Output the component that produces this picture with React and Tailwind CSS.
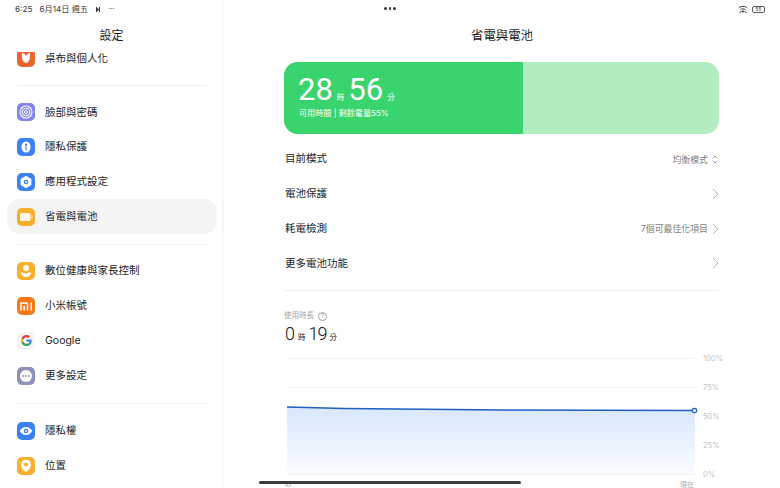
import React from "react";

const font = "font-['Inter','Noto_Sans_CJK_TC',sans-serif]";
const digits = "font-['Roboto','Noto_Sans_CJK_TC',sans-serif]";

const IconBox = ({ bg, children }) => (
  <div className={`w-[18px] h-[18px] rounded-[5px] flex items-center justify-center shrink-0 ${bg}`}>
    {children}
  </div>
);

const WallpaperIcon = () => (
  <IconBox bg="bg-[#f0622e]">
    <svg width="12" height="12" viewBox="0 0 12 12">
      <path d="M2 1c2 .3 3.300 1.500 4 3 .7-1.500 2-2.700 4-3 .4 4 0 9-4 10C2 10 1.600 5 2 1z" fill="#fff" />
    </svg>
  </IconBox>
);

const FaceIcon = () => (
  <IconBox bg="bg-[#8086ee]">
    <svg width="14" height="14" viewBox="0 0 14 14" fill="none" stroke="#fff">
      <circle cx="7" cy="7" r="6" strokeWidth="1.100" />
      <circle cx="7" cy="7" r="3.700" strokeWidth="1.100" />
      <circle cx="7" cy="7" r="1.500" strokeWidth="1" />
    </svg>
  </IconBox>
);

const PrivacyIcon = () => (
  <IconBox bg="bg-[#3b82f6]">
    <svg width="12" height="14" viewBox="0 0 12 14">
      <ellipse cx="6" cy="7" rx="4.600" ry="5.600" fill="#fff" />
      <path d="M6 4v6.500" stroke="#3b82f6" strokeWidth="1.100" />
      <circle cx="6" cy="4.500" r="1" fill="#3b82f6" />
    </svg>
  </IconBox>
);

const AppsIcon = () => (
  <IconBox bg="bg-[#3b82f6]">
    <svg width="14" height="14" viewBox="0 0 14 14">
      <path d="M7 .8l5.400 3.100v6.200L7 13.200 1.600 10.100V3.900z" fill="#fff" />
      <circle cx="7" cy="7" r="2.300" fill="#3b82f6" />
      <circle cx="7" cy="7" r="1.100" fill="#fff" />
    </svg>
  </IconBox>
);

const BatteryIcon = () => (
  <IconBox bg="bg-[#f7ae2c]">
    <svg width="14" height="10" viewBox="0 0 14 10">
      <rect x="1" y="1" width="10.500" height="8" rx="1.500" fill="#fff" fillOpacity="0.9" />
      <rect x="12.300" y="3.200" width="1.200" height="3.600" rx=".5" fill="#fff" fillOpacity="0.8" />
    </svg>
  </IconBox>
);

const WellbeingIcon = () => (
  <IconBox bg="bg-[#fbb02d]">
    <svg width="12" height="14" viewBox="0 0 12 14" fill="#fff">
      <circle cx="6" cy="4" r="2.900" />
      <path d="M.8 8.800C2.500 8.200 4.500 8.700 6 10c1.500-1.300 3.500-1.800 5.200-1.200C10.800 11.500 8.500 13 6 13S1.200 11.500.8 8.800z" />
    </svg>
  </IconBox>
);

const MiIcon = () => (
  <IconBox bg="bg-[#f57a14]">
    <svg width="13" height="9" viewBox="0 0 13 9" fill="none" stroke="#fff" strokeWidth="1.500">
      <path d="M1 8.500V1h5.200c.8 0 1.300.5 1.300 1.300v6.200M4.200 4v4.500" />
      <path d="M11.200.5v8" />
    </svg>
  </IconBox>
);

const GoogleIcon = () => (
  <IconBox bg="bg-[#f5f5f5]">
    <svg width="11" height="11" viewBox="0 0 24 24">
      <path fill="#4285F4" d="M23.500 12.300c0-.8-.1-1.600-.2-2.300H12v4.500h6.500c-.3 1.500-1.100 2.700-2.400 3.600v3h3.900c2.200-2.100 3.500-5.100 3.500-8.800z" />
      <path fill="#34A853" d="M12 24c3.200 0 6-1.100 8-2.900l-3.900-3c-1.100.7-2.500 1.200-4.100 1.200-3.100 0-5.800-2.100-6.700-5H1.300v3.100C3.300 21.300 7.300 24 12 24z" />
      <path fill="#FBBC05" d="M5.300 14.300c-.5-1.500-.5-3.100 0-4.600V6.600h-4C-.4 9.900-.4 14.100 1.300 17.400z" />
      <path fill="#EA4335" d="M12 4.800c1.800 0 3.300.6 4.600 1.800l3.400-3.400C17.900 1.200 15.200 0 12 0 7.300 0 3.300 2.700 1.300 6.600l4 3.100c.9-2.800 3.600-4.900 6.700-4.900z" />
    </svg>
  </IconBox>
);

const MoreIcon = () => (
  <IconBox bg="bg-[#8e93b5]">
    <svg width="14" height="14" viewBox="0 0 14 14">
      <circle cx="7" cy="7" r="6" fill="#fff" />
      <circle cx="4.300" cy="7" r=".9" fill="#8e93b5" />
      <circle cx="7" cy="7" r=".9" fill="#8e93b5" />
      <circle cx="9.700" cy="7" r=".9" fill="#8e93b5" />
    </svg>
  </IconBox>
);

const EyeIcon = () => (
  <IconBox bg="bg-[#3b82f6]">
    <svg width="14" height="10" viewBox="0 0 14 10">
      <path d="M.8 5C2.300 2.300 4.500 1 7 1s4.700 1.300 6.200 4C11.700 7.700 9.500 9 7 9S2.300 7.700.8 5z" fill="#fff" />
      <circle cx="7" cy="5" r="2.300" fill="#3b82f6" />
      <circle cx="7" cy="5" r="1" fill="#fff" />
    </svg>
  </IconBox>
);

const PinIcon = () => (
  <IconBox bg="bg-[#fbb02d]">
    <svg width="12" height="14" viewBox="0 0 12 14">
      <path d="M6 .8c2.800 0 5 2.100 5 4.900 0 3.100-2.800 5.800-5 7.500-2.200-1.700-5-4.400-5-7.500C1 2.900 3.200.8 6 .8z" fill="#fff" />
      <circle cx="6" cy="5.500" r="1.900" fill="#fbb02d" />
    </svg>
  </IconBox>
);

const Divider = ({ gap = "my-[9.100px]" }) => <div className={`ml-[17px] mr-[15px] h-px bg-[#efefef] ${gap}`} />;

const NavItem = ({ icon, label, active }) => (
  <div className={`h-[34.800px] ml-[7px] mr-[5px] px-[10px] flex items-center gap-[10px] rounded-[13px] text-[10.500px] text-[#1c1c1c] ${active ? "bg-[#f4f4f4]" : ""}`}>
    {icon}
    <span>{label}</span>
  </div>
);

const Chevron = () => (
  <svg width="7" height="12" viewBox="0 0 7 12" fill="none" stroke="#b4b4b4" strokeWidth="1">
    <path d="M1 1l5 5-5 5" />
  </svg>
);

const Updown = () => (
  <svg width="6" height="9" viewBox="0 0 6 9" fill="none" stroke="#8a8a8a" strokeWidth="0.9">
    <path d="M.8 3.300L3 1l2.200 2.300M.8 5.700L3 8l2.200-2.300" />
  </svg>
);

const SettingRow = ({ label, value, icon }) => (
  <div className="h-[34.700px] flex items-center justify-between pl-px">
    <span className="text-[10.500px] text-[#1c1c1c]">{label}</span>
    <div className="flex items-center gap-[4px]">
      {value && <span className="text-[8.900px] text-[#7d7d7d]">{value}</span>}
      <div className="w-[7px] flex justify-start">{icon}</div>
    </div>
  </div>
);

const Chart = () => (
  <svg width="445" height="134" viewBox="0 -4 445 134" className="block">
    <defs>
      <linearGradient id="fill" x1="0" y1="0" x2="0" y2="1">
        <stop offset="0" stopColor="#d9e7fd" />
        <stop offset="1" stopColor="#fafcff" />
      </linearGradient>
    </defs>
    {[0, 29, 58, 87, 116].map((y) => (
      <line key={y} x1="3" x2="411" y1={y + 0.5} y2={y + 0.5} stroke="#f1f1f1" />
    ))}
    <path d="M3 49 L60 50.500 L220 52 L411 52.500 V116 H3 Z" fill="url(#fill)" />
    <line x1="3" x2="411" y1="87.500" y2="87.500" stroke="#e8effb" />
    <path d="M3 49 L60 50.500 L220 52 L411 52.500" fill="none" stroke="#1f5fc0" strokeWidth="1.300" />
    <circle cx="410.500" cy="52.500" r="2.200" fill="#fff" stroke="#1f5fc0" strokeWidth="1.200" />
    {["100%", "75%", "50%", "25%", "0%"].map((t, i) => (
      <text key={t} x="419" y={i * 29 + 3} fontSize="7.500" fill="#c2c2c2">{t}</text>
    ))}
    <text x="396" y="128.500" fontSize="7" fill="#a8a8a8">現在</text>
    <text x="0" y="128.500" fontSize="7" fill="#a8a8a8">18</text>
  </svg>
);

export default function App() {
  return (
    <div className={`relative w-[780px] h-[488px] overflow-hidden bg-white flex ${font}`}>
      {/* status bar */}
      <div className="absolute z-20 top-0 left-0 right-0 h-[19px] px-[15px] flex items-center justify-between text-[#3a3a3a]">
        <div className="flex items-center gap-[7px] text-[8.200px]">
          <span>6:25</span>
          <span>6月14日 週五</span>
          <svg width="7" height="7" viewBox="0 0 7 7" fill="#3a3a3a">
            <path d="M1 .5v6l3-3zM4 1h1v5H4z" />
          </svg>
          <span className="-ml-[1px] text-[7px]">···</span>
        </div>
        <div className="flex items-center gap-[4px]">
          <svg width="10" height="9" viewBox="0 0 10 9" fill="none" stroke="#3a3a3a" strokeWidth="1">
            <path d="M.7 3C3 .8 7 .8 9.300 3M2.300 4.800C3.800 3.500 6.200 3.500 7.700 4.800M1.500 8l2-2M8.500 8l-2-2" />
            <circle cx="5" cy="6.500" r="0.700" fill="#3a3a3a" />
          </svg>
          <div className="w-[13px] h-[7px] rounded-[2px] border border-[#5a5a5a] flex items-center justify-center text-[5px] leading-none">55</div>
        </div>
      </div>
      <div className="absolute z-20 top-[7px] left-[384px] flex gap-[2px]">
        <div className="w-[2.500px] h-[2.500px] rounded-full bg-[#333]" />
        <div className="w-[2.500px] h-[2.500px] rounded-full bg-[#333]" />
        <div className="w-[2.500px] h-[2.500px] rounded-full bg-[#333]" />
      </div>

      {/* sidebar */}
      <aside className="w-[224px] h-full shrink-0 border-r-2 border-[#f7f7f7] flex flex-col">
        <div className="h-[52px] pt-[28px] pl-px shrink-0 text-center text-[12px] leading-[16px] text-[#1c1c1c]">設定</div>
        <div className="flex-1 overflow-hidden">
          <div className="-mt-[11px]">
            <NavItem icon={<WallpaperIcon />} label="桌布與個人化" />
            <Divider />
            <NavItem icon={<FaceIcon />} label="臉部與密碼" />
            <NavItem icon={<PrivacyIcon />} label="隱私保護" />
            <NavItem icon={<AppsIcon />} label="應用程式設定" />
            <NavItem icon={<BatteryIcon />} label="省電與電池" active />
            <Divider gap="my-[9.400px]" />
            <NavItem icon={<WellbeingIcon />} label="數位健康與家長控制" />
            <NavItem icon={<MiIcon />} label="小米帳號" />
            <NavItem icon={<GoogleIcon />} label="Google" />
            <NavItem icon={<MoreIcon />} label="更多設定" />
            <Divider gap="my-[9.700px]" />
            <NavItem icon={<EyeIcon />} label="隱私權" />
            <NavItem icon={<PinIcon />} label="位置" />
          </div>
        </div>
      </aside>

      {/* main */}
      <main className="flex-1 min-w-0">
        <div className="pt-[28px] h-[62px] text-center text-[12.400px] leading-[16px] text-[#1c1c1c]">省電與電池</div>
        <div className="ml-[60px] w-[435px]">
          <div className="h-[72px] rounded-[14px] overflow-hidden flex bg-[#b2edc2]">
            <div className="w-[239px] bg-[#3ad46e] text-white pl-[14px] pt-[9px]">
              <div className="flex items-baseline h-[38px] leading-[38px]">
                <span className={`text-[31px] ${digits}`}>28</span>
                <span className="text-[7.500px] leading-none mx-[4px]">時</span>
                <span className={`text-[31px] ${digits}`}>56</span>
                <span className="text-[7.500px] leading-none ml-[4px]">分</span>
              </div>
              <div className="text-[8.100px] leading-[12px] pl-px -mt-[2px]">可用時間 | 剩餘電量55%</div>
            </div>
          </div>
          <div className="pt-[8px]">
            <SettingRow label="目前模式" value="均衡模式" icon={<Updown />} />
            <SettingRow label="電池保護" icon={<Chevron />} />
            <SettingRow label="耗電檢測" value="7個可最佳化項目" icon={<Chevron />} />
            <SettingRow label="更多電池功能" icon={<Chevron />} />
          </div>
          <div className="mt-[9.500px] h-px bg-[#efefef]" />
          <div className="mt-[20px] flex items-center gap-[4px] text-[7.500px] leading-[10px] text-[#a3a3a3]">
            <span>使用時長</span>
            <span className="w-[9px] h-[9px] rounded-full border border-[#a3a3a3] flex items-center justify-center text-[6.500px] leading-none">?</span>
          </div>
          <div className="mt-[2px] pl-px flex items-baseline h-[22px] leading-[22px] text-[#111]">
            <span className={`text-[18px] font-light ${digits}`}>0</span>
            <span className="text-[7.500px] leading-none mx-[3px]">時</span>
            <span className={`text-[18px] font-light tracking-[-1px] ${digits}`}>19</span>
            <span className="text-[7.500px] leading-none ml-[3px]">分</span>
          </div>
          <div className="mt-[9px]">
            <Chart />
          </div>
        </div>
      </main>

      {/* home bar */}
      <div className="absolute left-[259px] top-[481px] w-[262px] h-[2.500px] rounded-full bg-[#3c3c3c]" />
    </div>
  );
}
